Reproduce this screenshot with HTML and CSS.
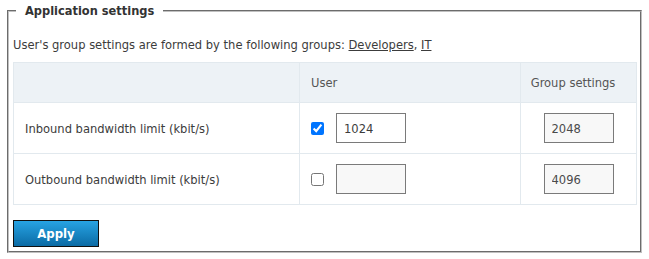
FILE: index.html
```html
<!DOCTYPE html>
<html lang="en">
<head>
<meta charset="utf-8">
<title>Application settings</title>
<link rel="stylesheet" href="styles.css">
</head>
<body>
<div class="page">
  <fieldset class="panel">
    <legend class="panel-title">Application settings</legend>
    <p class="intro">User's group settings are formed by the following groups: <a href="#" class="group-link">Developers</a>, <a href="#" class="group-link">IT</a></p>
    <table class="settings">
      <colgroup>
        <col class="col-name">
        <col class="col-user">
        <col class="col-group">
      </colgroup>
      <thead>
        <tr class="head-row">
          <th class="th-name"></th>
          <th class="th-user">User</th>
          <th class="th-group">Group settings</th>
        </tr>
      </thead>
      <tbody>
        <tr class="row">
          <td class="cell-name">Inbound bandwidth limit (kbit/s)</td>
          <td class="cell-user">
            <div class="user-ctrl">
              <input type="checkbox" class="check" checked>
              <input type="text" class="field" value="1024">
            </div>
          </td>
          <td class="cell-group"><input type="text" class="field field-ro" value="2048" readonly></td>
        </tr>
        <tr class="row">
          <td class="cell-name">Outbound bandwidth limit (kbit/s)</td>
          <td class="cell-user">
            <div class="user-ctrl">
              <input type="checkbox" class="check">
              <input type="text" class="field field-ro" value="" disabled>
            </div>
          </td>
          <td class="cell-group"><input type="text" class="field field-ro" value="4096" readonly></td>
        </tr>
      </tbody>
    </table>
    <div class="actions">
      <button type="button" class="apply">Apply</button>
    </div>
  </fieldset>
</div>
</body>
</html>
```

FILE: styles.css
```css
html, body {
  margin: 0;
  padding: 0;
  background: #ffffff;
}

body {
  font-family: "DejaVu Sans Condensed", "DejaVu Sans", sans-serif;
  font-size: 12.8px;
  color: #3c3c3c;
}

.page {
  padding: 1px 7px 7px 7px;
}

.panel {
  margin: 0;
  padding: 0 4px 4px 4px;
  border: 2px groove #c0c0c0;
  min-width: 0;
}

.panel-title {
  margin-left: 3px;
  padding: 0 9px;
  font-size: 12.7px;
  font-weight: bold;
  line-height: 20px;
  color: #333333;
}

.intro {
  margin: 16px 0 9px 0;
  line-height: 16px;
}

.group-link {
  color: #3c3c3c;
  text-decoration: underline;
}

.settings {
  width: 623px;
  border-collapse: collapse;
  table-layout: fixed;
  border: 1px solid #e2e9ee;
}

.col-name { width: 286px; }
.col-user { width: 221px; }
.col-group { width: 116px; }

.head-row {
  background: #edf2f6;
  height: 40px;
}

.settings th {
  font-weight: normal;
  color: #555555;
  text-align: left;
  padding: 0 11px;
  border: 1px solid #e2e9ee;
  vertical-align: middle;
}

.settings th.th-group {
  text-align: center;
  padding: 0 11px 0 0;
}

.row {
  height: 51px;
}

.settings td {
  padding: 0 11px;
  border: 1px solid #e2e9ee;
  vertical-align: middle;
}

.settings td.cell-group {
  text-align: center;
  padding: 0;
}

.user-ctrl {
  display: flex;
  align-items: center;
  gap: 12px;
}

.check {
  margin: 0;
  width: 13px;
  height: 13px;
}

.field {
  box-sizing: border-box;
  width: 70px;
  height: 30px;
  margin: 0;
  padding: 0 7px;
  border: 1px solid #7a7a7a;
  border-radius: 0;
  background: #ffffff;
  font-family: "DejaVu Sans Condensed", "DejaVu Sans", sans-serif;
  font-size: 12.8px;
  color: #3c3c3c;
  outline: none;
}

.field-ro {
  background: #f8f8f8;
  color: #4a4a4a;
}

.actions {
  padding-top: 15px;
}

.apply {
  display: block;
  width: 86px;
  height: 27px;
  margin: 0;
  padding: 0;
  border: 1px solid #101010;
  border-radius: 0;
  background: linear-gradient(#27a3e3, #0b6ba5);
  color: #ffffff;
  font-family: "DejaVu Sans Condensed", "DejaVu Sans", sans-serif;
  font-size: 13px;
  font-weight: bold;
  cursor: pointer;
}
```
